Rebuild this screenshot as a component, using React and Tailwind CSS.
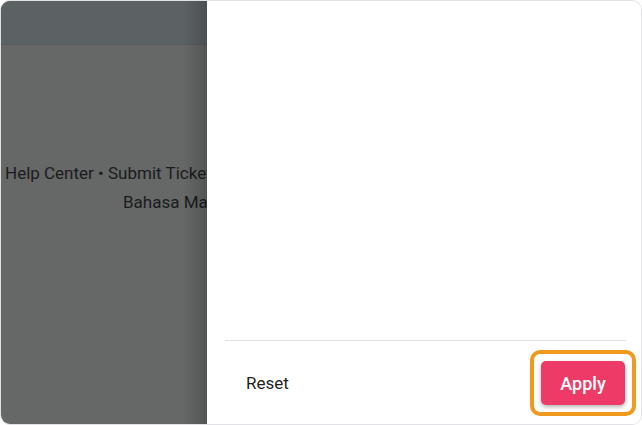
export default function App() {
  return (
    <div className="w-[642px] h-[425px] bg-white">
      <div
        className="w-[642px] h-[425px] flex overflow-hidden rounded-[10px] border border-[#e2e2e6] bg-white"
        style={{ fontFamily: "Roboto, 'Liberation Sans', sans-serif" }}
      >
        <div className="w-[206px] shrink-0 flex flex-col bg-[#666767] relative">
          <div className="h-[44px] bg-[#5c6164] border-b border-[#585c5e]" />
          <div className="flex flex-col pt-[114px] text-[17px] text-[#1b1c1d] whitespace-nowrap overflow-hidden">
            <div className="pl-[4px] leading-[29px]">Help Center • Submit Ticket</div>
            <div className="pl-[122px] leading-[29px]">Bahasa Malaysia</div>
          </div>
          <div className="absolute top-0 right-0 bottom-0 w-[24px] bg-gradient-to-r from-transparent to-[rgba(0,0,0,0.18)]" />
        </div>
        <div className="flex-1 flex flex-col bg-white">
          <div className="flex-1" />
          <div className="mx-[18px] mr-[15px] border-t border-[#e0e0e0]" />
          <div className="h-[83px] flex items-center justify-between pl-[39px] pr-[5px]">
            <span className="text-[17px] text-[#1f1f1f] mt-[2px]">Reset</span>
            <div className="rounded-[10px] border-[4px] border-[#ef9a1e] p-[7px] mt-[1px]">
              <button className="w-[84px] h-[44px] rounded-[5px] bg-[#ee3a67] text-white text-[18px] font-medium shadow-[0_2px_4px_rgba(0,0,0,0.3)]">
                Apply
              </button>
            </div>
          </div>
        </div>
      </div>
    </div>
  );
}
